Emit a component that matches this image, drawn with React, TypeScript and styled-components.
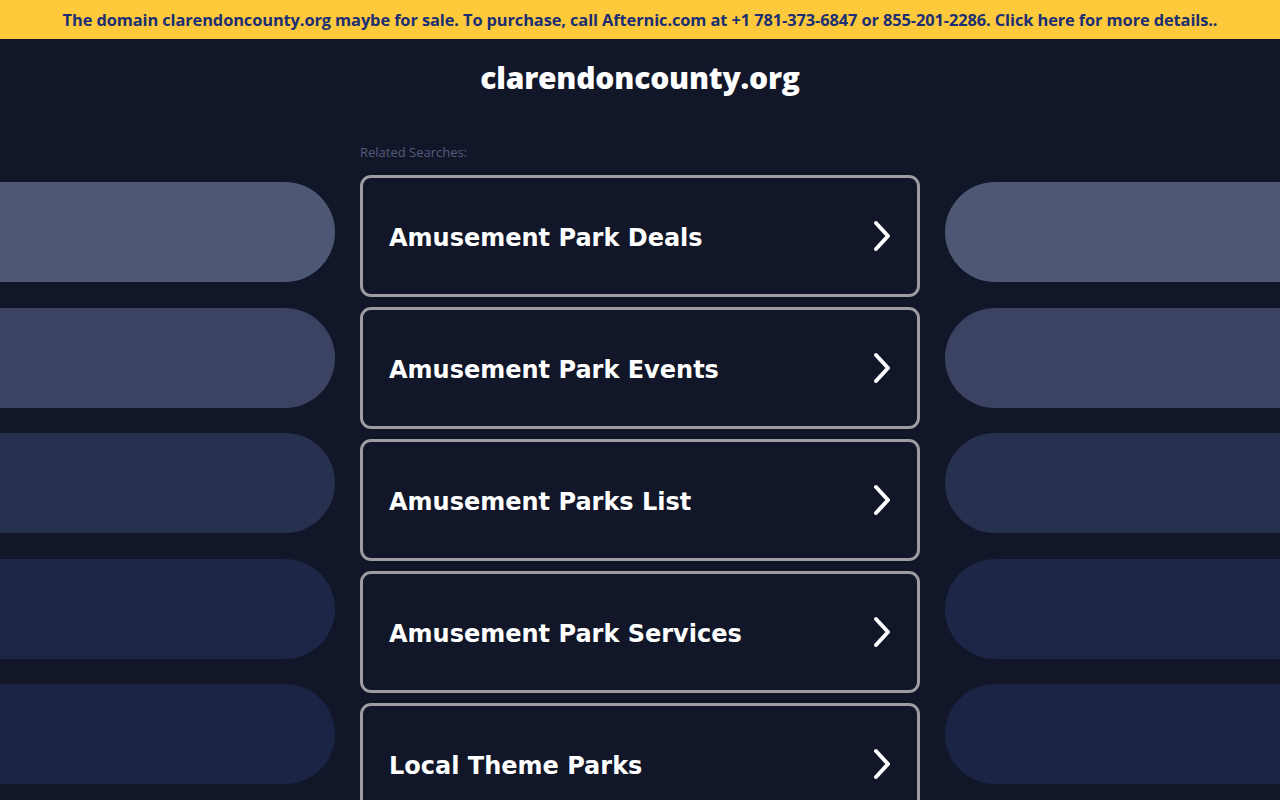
import React from "react";
import styled, { createGlobalStyle } from "styled-components";

const Global = createGlobalStyle`
  html, body { margin: 0; padding: 0; background: #111729; }
  body { font-family: "Open Sans", "Liberation Sans", sans-serif; }
  * { box-sizing: border-box; }
`;

const Banner = styled.a`
  display: flex;
  align-items: center;
  justify-content: center;
  height: 39px;
  background: #fec93b;
  color: #1b2f72;
  font-family: "Open Sans", sans-serif;
  font-weight: 700;
  font-size: 16.4px;
  text-decoration: none;
  letter-spacing: -0.1px;
`;

const Title = styled.h1`
  margin: 0;
  padding-top: 18px;
  text-align: center;
  color: #ffffff;
  font-family: "Open Sans", sans-serif;
  font-weight: 800;
  font-size: 30px;
  line-height: 42px;
  letter-spacing: -0.2px;
`;

const Main = styled.div`
  display: grid;
  grid-template-columns: 335px 560px 335px;
  column-gap: 25px;
  margin-top: 42px;
`;

const Side = styled.div`
  display: flex;
  flex-direction: column;
  gap: 25.5px;
  padding-top: 41px;
`;

const Pill = styled.div<{ $bg: string; $side: "left" | "right" }>`
  height: 100px;
  background: ${(p) => p.$bg};
  border-radius: ${(p) => (p.$side === "left" ? "0 50px 50px 0" : "50px 0 0 50px")};
`;

const Center = styled.div`
  display: flex;
  flex-direction: column;
`;

const Label = styled.div`
  color: #545c7b;
  font-family: "Open Sans", sans-serif;
  font-size: 13px;
  line-height: 20px;
  margin-top: 1px;
  margin-bottom: 13px;
`;

const Cards = styled.div`
  display: flex;
  flex-direction: column;
  gap: 10px;
`;

const Card = styled.a`
  display: flex;
  align-items: center;
  justify-content: space-between;
  height: 122px;
  padding: 3px 25px 0 26px;
  border: 3px solid #9c9ca1;
  border-radius: 11px;
  text-decoration: none;
  color: #ffffff;
`;

const CardText = styled.span`
  font-family: "DejaVu Sans", Verdana, sans-serif;
  font-weight: 700;
  font-size: 24px;
`;

const ChevronIcon = styled.svg`
  margin-bottom: 4px;
`;

const Chevron = () => (
  <ChevronIcon width="20" height="32" viewBox="0 0 20 32" fill="none">
    <path d="M4 3 L16 16 L4 29" stroke="#ffffff" strokeWidth="4" strokeLinecap="round" strokeLinejoin="round" />
  </ChevronIcon>
);

const pillColors = ["#4e5774", "#3b4262", "#283050", "#1e2648", "#1c2445"];
const items = [
  "Amusement Park Deals",
  "Amusement Park Events",
  "Amusement Parks List",
  "Amusement Park Services",
  "Local Theme Parks",
];

export default function App() {
  return (
    <>
      <Global />
      <Banner href="#">
        The domain clarendoncounty.org maybe for sale. To purchase, call Afternic.com at +1 781-373-6847 or 855-201-2286. Click here for more details..
      </Banner>
      <Title>clarendoncounty.org</Title>
      <Main>
        <Side>
          {pillColors.map((c, i) => (
            <Pill key={i} $bg={c} $side="left" />
          ))}
        </Side>
        <Center>
          <Label>Related Searches:</Label>
          <Cards>
            {items.map((t) => (
              <Card key={t} href="#">
                <CardText>{t}</CardText>
                <Chevron />
              </Card>
            ))}
          </Cards>
        </Center>
        <Side>
          {pillColors.map((c, i) => (
            <Pill key={i} $bg={c} $side="right" />
          ))}
        </Side>
      </Main>
    </>
  );
}
